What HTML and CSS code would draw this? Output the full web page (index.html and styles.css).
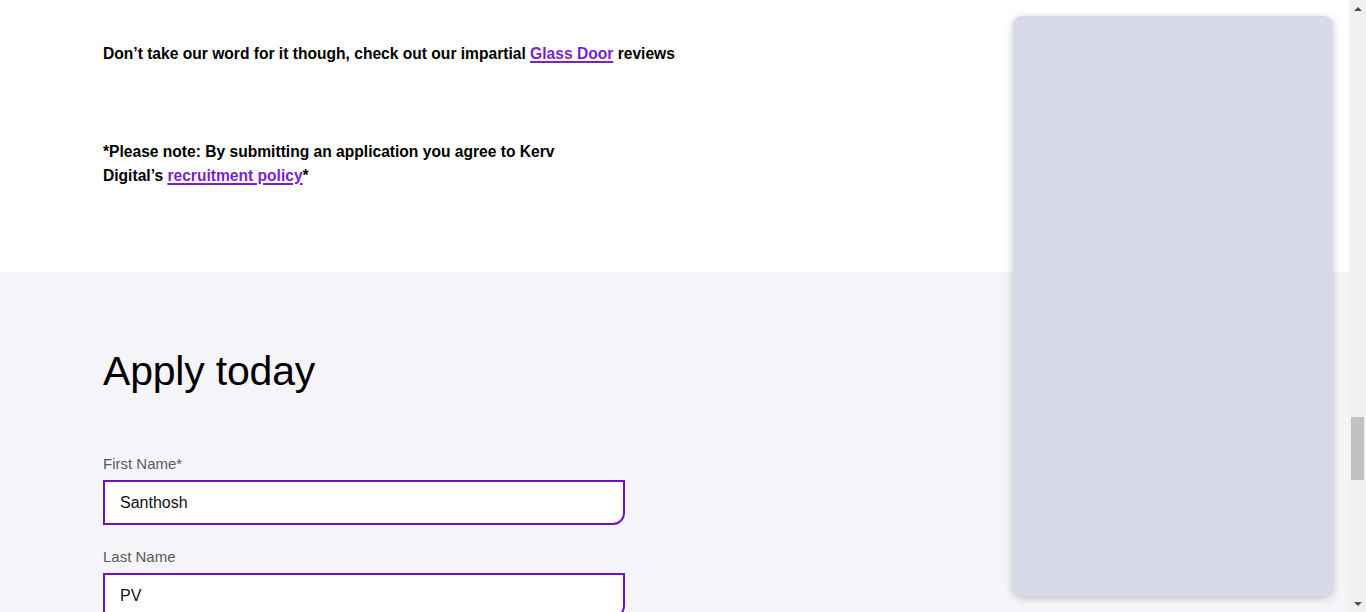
FILE: index.html
```html
<!DOCTYPE html>
<html lang="en">
<head>
<meta charset="utf-8">
<title>Apply today</title>
<link rel="stylesheet" href="styles.css">
</head>
<body>
<div class="page">
  <main class="content">
    <section class="intro">
      <p class="lead">Don’t take our word for it though, check out our impartial <a href="#">Glass Door</a> reviews</p>
      <p class="note">*Please note: By submitting an application you agree to Kerv Digital’s <a href="#">recruitment policy</a>*</p>
    </section>
    <section class="apply">
      <h2 class="apply-title">Apply today</h2>
      <form class="form">
        <label class="field">
          <span class="field-label">First Name*</span>
          <input class="field-input" type="text" value="Santhosh">
        </label>
        <label class="field">
          <span class="field-label">Last Name</span>
          <input class="field-input" type="text" value="PV">
        </label>
      </form>
    </section>
    <aside class="side-card"></aside>
  </main>
  <div class="scrollbar">
    <div class="sb-arrow sb-up"></div>
    <div class="sb-track"><div class="sb-thumb"></div></div>
    <div class="sb-arrow sb-down"></div>
  </div>
</div>
</body>
</html>
```

FILE: styles.css
```css
* { box-sizing: border-box; }
html, body { margin: 0; height: 100%; overflow: hidden; }
body {
  font-family: "Liberation Sans", Arial, sans-serif;
  color: #000;
  background: #fff;
}
.page {
  display: flex;
  height: 612px;
}
.content {
  flex: 1;
  position: relative;
  overflow: hidden;
  display: flex;
  flex-direction: column;
}
.intro {
  background: #fff;
  height: 272px;
  padding: 42px 0 0 103px;
  flex-shrink: 0;
}
.intro p {
  margin: 0;
  font-size: 15.6px;
  font-weight: 700;
  line-height: 24px;
}
.intro a {
  color: #7a1fd1;
  text-decoration: underline;
  text-decoration-thickness: 1.5px;
  text-underline-offset: 2px;
}
.note {
  margin-top: 74px !important;
  max-width: 470px;
}
.apply {
  flex: 1;
  background: #f4f4f9;
  padding: 75px 0 0 103px;
}
.apply-title {
  margin: 0 0 59px;
  font-family: "Liberation Sans", Arial, sans-serif;
  font-weight: 400;
  font-size: 41px;
  line-height: 48px;
  letter-spacing: -0.2px;
}
.form {
  display: flex;
  flex-direction: column;
  gap: 22px;
  width: 522px;
}
.field {
  display: flex;
  flex-direction: column;
  gap: 6px;
}
.field-label {
  font-size: 15px;
  line-height: 20px;
  color: #5a5a5a;
}
.field-input {
  height: 45px;
  border: 2px solid #6c12c6;
  border-radius: 0 0 12px 0;
  background: #fff;
  padding: 0 15px;
  font-family: "Liberation Sans", Arial, sans-serif;
  font-size: 16px;
  color: #111;
  outline: none;
}
.side-card {
  position: absolute;
  top: 16px;
  left: 1013px;
  width: 320px;
  height: 580px;
  background: #d9dae8;
  border-radius: 9px;
  box-shadow: 0 2px 8px rgba(0, 0, 0, 0.22);
}
.scrollbar {
  width: 17px;
  flex-shrink: 0;
  background: #f1f1f1;
  display: flex;
  flex-direction: column;
}
.sb-arrow {
  height: 17px;
  display: flex;
  align-items: center;
  justify-content: center;
}
.sb-up::before, .sb-down::before {
  content: "";
  width: 0;
  height: 0;
  border-left: 4px solid transparent;
  border-right: 4px solid transparent;
}
.sb-up::before { border-bottom: 4px solid #505050; }
.sb-down::before { border-top: 4px solid #505050; }
.sb-track {
  flex: 1;
  padding-top: 400px;
  display: flex;
  justify-content: center;
}
.sb-thumb {
  width: 13px;
  height: 63px;
  background: #c1c1c1;
}
```
